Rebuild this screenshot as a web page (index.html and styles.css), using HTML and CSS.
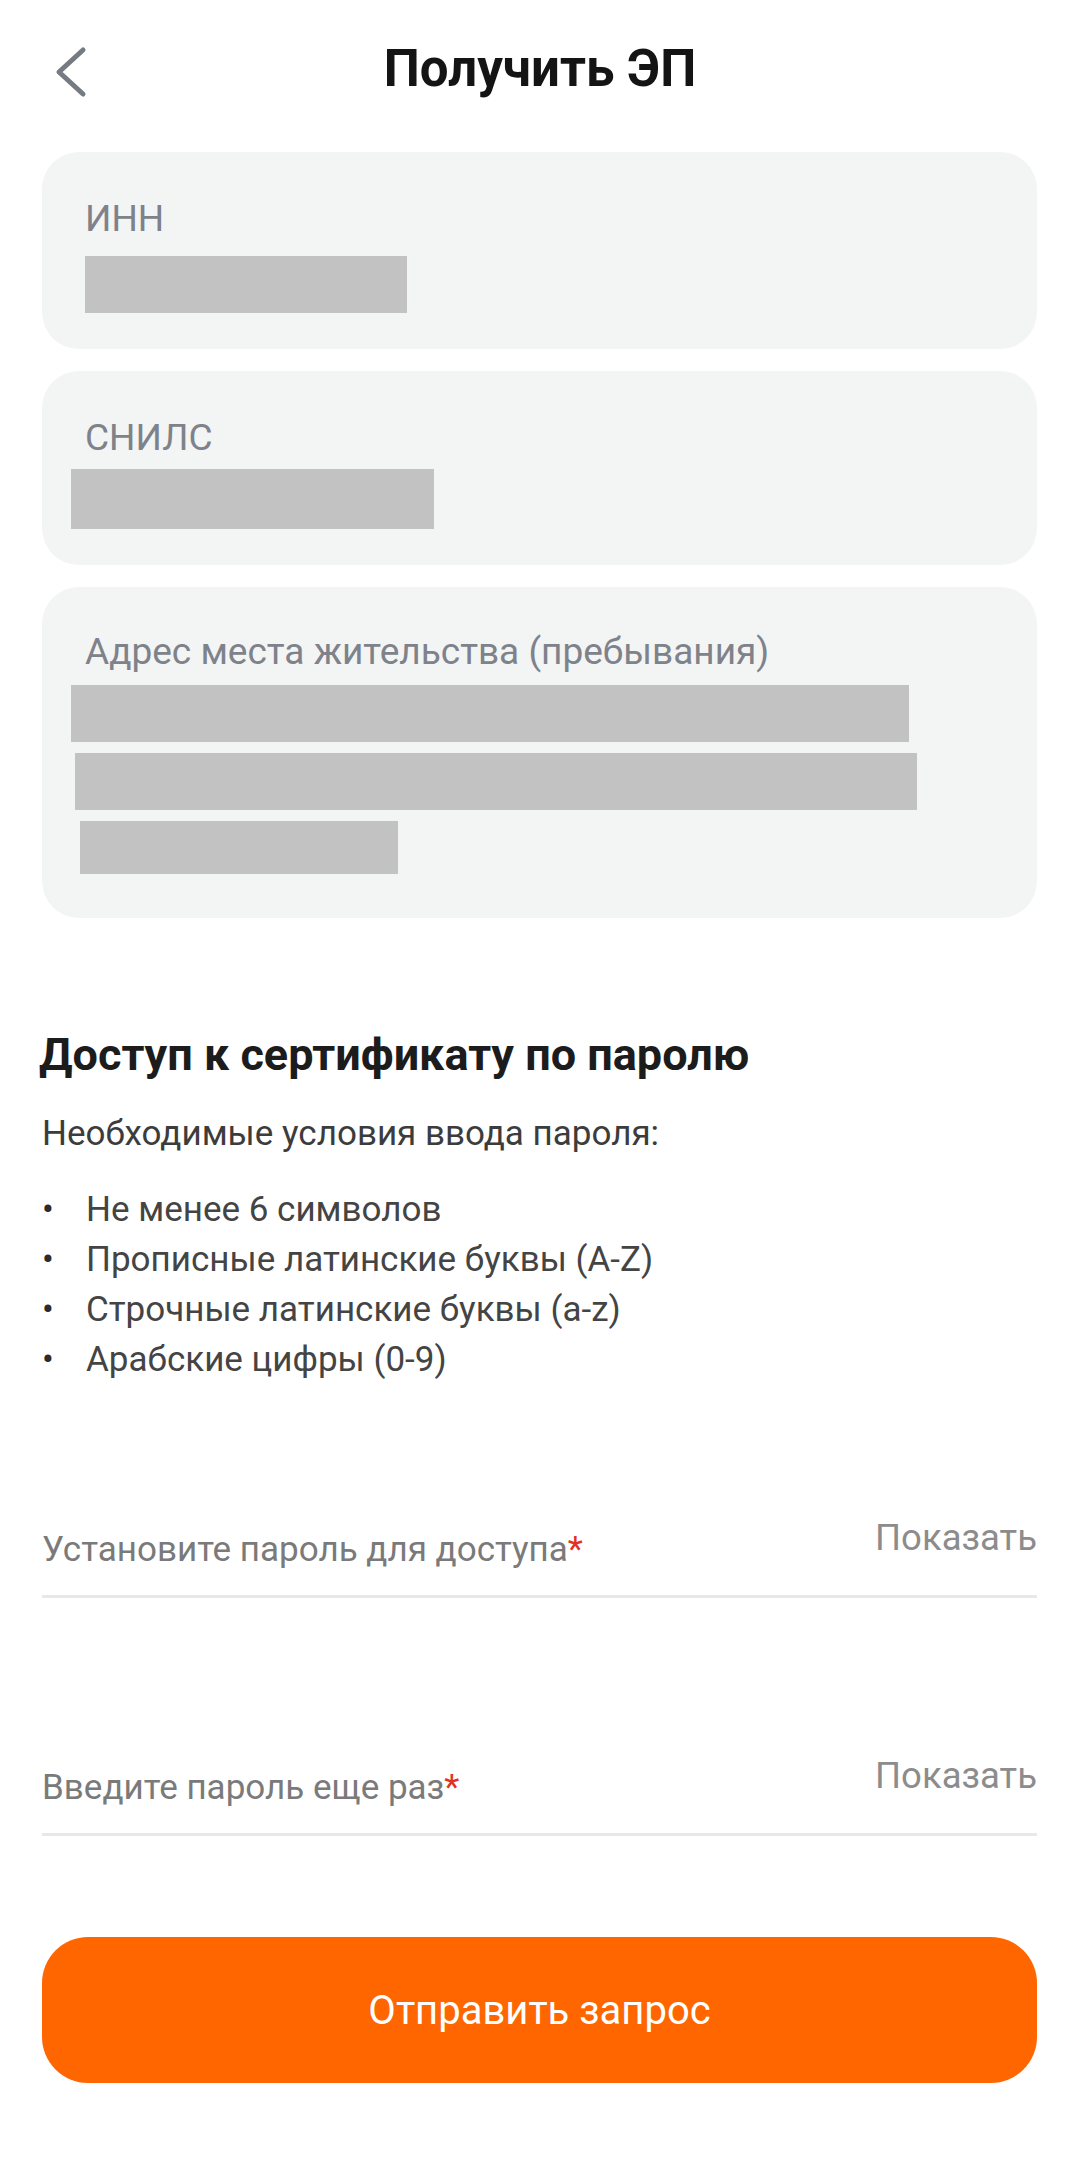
FILE: index.html
```html
<!DOCTYPE html>
<html lang="ru">
<head>
    <meta charset="UTF-8">
    <meta name="viewport" content="width=device-width, initial-scale=1.0">
    <title>Получить ЭП</title>
    <link rel="stylesheet" href="styles.css">
</head>
<body>
    <!-- Top bar -->
    <header class="topbar">
        <a class="back-btn" href="#" aria-label="Назад">
            <svg width="34" height="52" viewBox="0 0 34 52">
                <path d="M29 4 L5 26 L29 48" fill="none" stroke="#767a81" stroke-width="5" stroke-linecap="round" stroke-linejoin="round"/>
            </svg>
        </a>
        <h1 class="topbar-title">Получить ЭП</h1>
        <span></span>
    </header>

    <main class="page">
        <!-- Personal data -->
        <section class="cards">
            <div class="info-card card-inn">
                <div class="info-label">ИНН</div>
                <div class="redact redact-inn"></div>
            </div>
            <div class="info-card card-snils">
                <div class="info-label">СНИЛС</div>
                <div class="redact redact-snils"></div>
            </div>
            <div class="info-card card-address">
                <div class="info-label">Адрес места жительства (пребывания)</div>
                <div class="redact redact-addr1"></div>
                <div class="redact redact-addr2"></div>
                <div class="redact redact-addr3"></div>
            </div>
        </section>

        <!-- Password -->
        <section class="password-block">
            <h2 class="section-title">Доступ к сертификату по паролю</h2>
            <p class="hint">Необходимые условия ввода пароля:</p>
            <ul class="rules">
                <li>Не менее 6 символов</li>
                <li>Прописные латинские буквы (A-Z)</li>
                <li>Строчные латинские буквы (a-z)</li>
                <li>Арабские цифры (0-9)</li>
            </ul>

            <div class="pass-field field-first">
                <label class="pass-label">Установите пароль для доступа<span class="req">*</span></label>
                <a class="show-link" href="#">Показать</a>
            </div>
            <div class="pass-field field-second">
                <label class="pass-label">Введите пароль еще раз<span class="req">*</span></label>
                <a class="show-link" href="#">Показать</a>
            </div>
        </section>

        <button class="submit-btn" type="button">Отправить запрос</button>
    </main>
</body>
</html>
```

FILE: styles.css
```css
* {
    box-sizing: border-box;
    margin: 0;
    padding: 0;
}

body {
    background: #ffffff;
    font-family: Roboto, "Noto Sans", Arial, sans-serif;
    color: #3c3c3c;
}

/* top bar */
.topbar {
    display: grid;
    grid-template-columns: 1fr auto 1fr;
    align-items: center;
    height: 138px;
}

.back-btn {
    display: flex;
    padding-left: 54px;
    margin-top: 6px;
}

.topbar-title {
    font-size: 51px;
    font-weight: 700;
    line-height: 56px;
    color: #141414;
}

.page {
    padding: 14px 43px 0 42px;
}

/* info cards */
.cards {
    display: flex;
    flex-direction: column;
    gap: 22px;
}

.info-card {
    background: #f3f4f4;
    border-radius: 37px;
    padding: 46px 43px 36px;
}

.card-address {
    padding-top: 44px;
    padding-bottom: 44px;
}

.info-label {
    font-size: 37px;
    line-height: 42px;
    color: #7e828a;
}

.redact {
    background: #c2c2c2;
}

.redact-inn {
    width: 322px;
    height: 57px;
    margin-top: 16px;
}

.redact-snils {
    width: 363px;
    height: 60px;
    margin-top: 10px;
    margin-left: -14px;
}

.redact-addr1 {
    width: 838px;
    height: 57px;
    margin-top: 12px;
    margin-left: -14px;
}

.redact-addr2 {
    width: 842px;
    height: 57px;
    margin-top: 11px;
    margin-left: -10px;
}

.redact-addr3 {
    width: 318px;
    height: 53px;
    margin-top: 11px;
    margin-left: -5px;
}

/* password section */
.password-block {
    margin-top: 112px;
}

.section-title {
    font-size: 45px;
    font-weight: 700;
    line-height: 50px;
    color: #1c1c1c;
    margin-left: -3px;
}

.hint {
    font-size: 35px;
    line-height: 50px;
    margin-top: 29px;
    color: #3c3c3c;
}

.rules {
    list-style: none;
    margin-top: 26px;
}

.rules li {
    position: relative;
    font-size: 35px;
    line-height: 50px;
    padding-left: 44px;
    color: #444444;
}

.rules li::before {
    content: "•";
    position: absolute;
    left: 0;
    color: #2b2b2b;
}

.pass-field {
    display: flex;
    justify-content: space-between;
    align-items: flex-start;
    padding-bottom: 20px;
    border-bottom: 3px solid #e8e8e8;
}

.field-first {
    margin-top: 128px;
}

.field-second {
    margin-top: 153px;
}

.pass-label {
    font-size: 35px;
    line-height: 50px;
    margin-top: 12px;
    color: #7a7a7a;
}

.req {
    color: #e2321f;
}

.show-link {
    font-size: 36.5px;
    line-height: 50px;
    color: #8c8c8c;
    text-decoration: none;
}

.submit-btn {
    display: block;
    width: 100%;
    height: 146px;
    margin-top: 101px;
    border: none;
    border-radius: 46px;
    background: #ff6600;
    color: #ffffff;
    font-family: Roboto, "Noto Sans", Arial, sans-serif;
    font-size: 40px;
    cursor: pointer;
}
```
